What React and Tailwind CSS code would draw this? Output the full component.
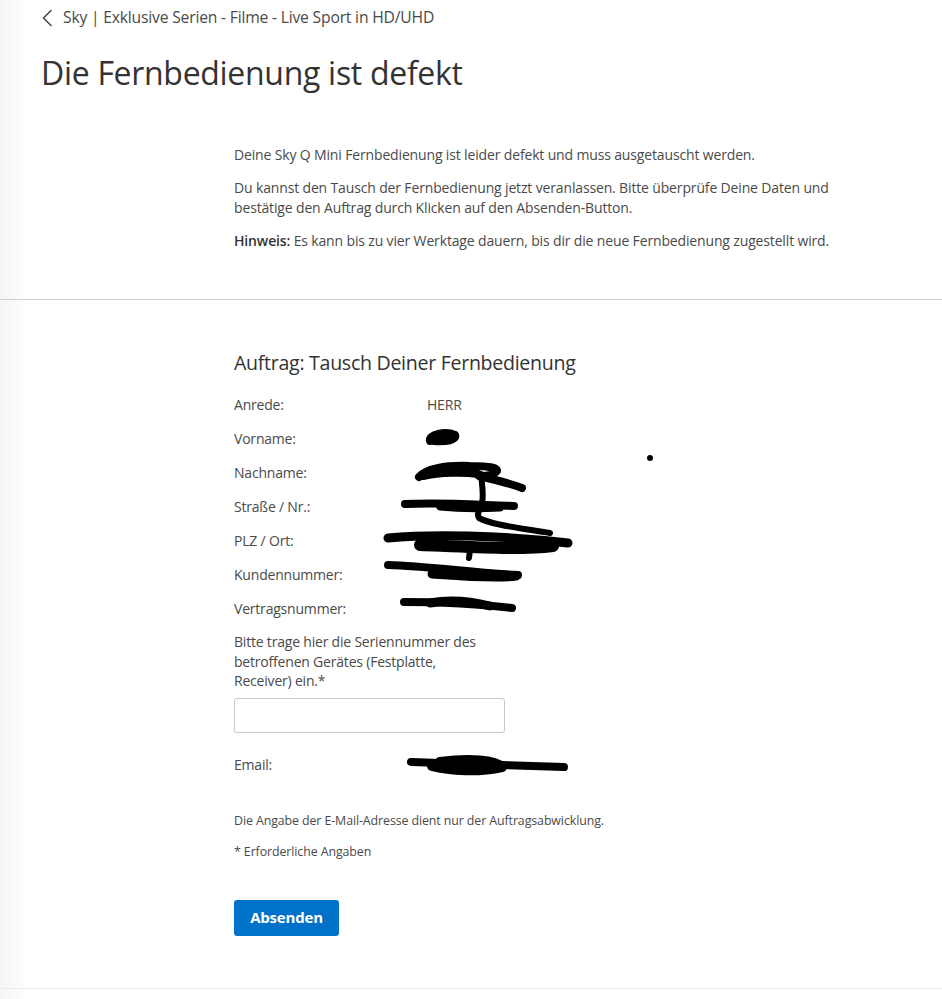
import React from "react";

function Chevron() {
  return (
    <svg width="12" height="18" viewBox="0 0 12 18" className="shrink-0">
      <path d="M10 1.5 L2.5 9 L10 16.5" fill="none" stroke="#4a4a4a" strokeWidth="1.6" strokeLinecap="round" strokeLinejoin="round" />
    </svg>
  );
}

function Row({ label, value }) {
  return (
    <div className="flex h-[34px] items-start">
      <div className="w-[193px] shrink-0">{label}</div>
      <div>{value}</div>
    </div>
  );
}

function Scribbles() {
  return (
    <svg width="942" height="999" viewBox="0 0 942 999" className="pointer-events-none absolute left-0 top-0">
      <g fill="none" stroke="#000" strokeLinecap="round" strokeLinejoin="round">
        {/* Vorname */}
        <path d="M430 441 C428 434 446 431 455 435 C457 440 446 442 434 441" strokeWidth="8" />
        {/* Nachname */}
        <path d="M419 477 C425 469 445 465 470 466 C490 466 500 468 496 472 C492 476 482 476 479 476 C495 480 510 483 522 488" strokeWidth="8" />
        <path d="M423 476 C440 472 465 472 478 474" strokeWidth="8" />
        <path d="M481 474 C482 485 484 495 482 503 C480 510 476 514 479 518 C492 525 520 528 550 533" strokeWidth="6" />
        {/* Strasse */}
        <path d="M405 504 C440 502 480 505 514 506" strokeWidth="8" />
        <path d="M440 507 C460 509 480 509 500 508" strokeWidth="7" />
        {/* PLZ */}
        <path d="M388 538 C430 534 500 535 568 543" strokeWidth="9" />
        <path d="M420 545 C470 547 520 550 553 546" strokeWidth="12" />
        <path d="M470 550 L469 558" strokeWidth="6" />
        {/* Kundennummer */}
        <path d="M388 565 C430 566 470 573 518 575" strokeWidth="8" />
        <path d="M432 574 C460 576 495 579 516 576" strokeWidth="9" />
        {/* Vertragsnummer */}
        <path d="M404 602 C440 602 480 604 512 608" strokeWidth="8" />
        <path d="M430 603 C450 599 470 601 490 606" strokeWidth="9" />
        {/* Email */}
        <path d="M411 762 C450 763 520 766 564 767" strokeWidth="8" />
        <path d="M432 766 C450 771 480 772 502 767 C495 760 470 758 440 762" strokeWidth="10" />
      </g>
      <circle cx="650" cy="458" r="3" fill="#000" />
    </svg>
  );
}

export default function App() {
  return (
    <div className="relative min-h-[999px] bg-white font-['Open_Sans',sans-serif] text-[#4a4a4a]">
      <div className="pointer-events-none absolute bottom-0 left-0 top-0 w-[24px] bg-gradient-to-r from-[#f5f5f5] to-[#fdfdfd]" />

      <div className="relative h-[300px] border-b border-[#cfcfcf]">
        <div className="flex items-center gap-[10px] pl-[41px] pt-[6px] text-[15.7px] tracking-[-0.2px]">
          <Chevron />
          <span>Sky | Exklusive Serien - Filme - Live Sport in HD/UHD</span>
        </div>
        <h1 className="mt-[22px] pl-[41px] text-[32px] font-normal leading-[42px] tracking-[-0.3px] text-[#333]">
          Die Fernbedienung ist defekt
        </h1>
        <div className="ml-[234px] mt-[51px] w-[610px] text-[14px] leading-[20px] tracking-[-0.15px]">
          <p>Deine Sky Q Mini Fernbedienung ist leider defekt und muss ausgetauscht werden.</p>
          <p className="mt-[13px]">
            Du kannst den Tausch der Fernbedienung jetzt veranlassen. Bitte überprüfe Deine Daten und bestätige den Auftrag durch Klicken auf den Absenden-Button.
          </p>
          <p className="mt-[13px]">
            <b className="font-semibold text-[#333]">Hinweis:</b> Es kann bis zu vier Werktage dauern, bis dir die neue Fernbedienung zugestellt wird.
          </p>
        </div>
      </div>

      <div className="relative h-[689px] border-b border-[#ececec]">
        <div className="ml-[234px] pt-[49px] text-[14px] tracking-[-0.2px]">
          <h2 className="text-[19.6px] font-normal leading-[28px] tracking-[-0.3px] text-[#333]">
            Auftrag: Tausch Deiner Fernbedienung
          </h2>
          <div className="mt-[18px] leading-[20px]">
            <Row label="Anrede:" value="HERR" />
            <Row label="Vorname:" value="" />
            <Row label="Nachname:" value="" />
            <Row label="Straße / Nr.:" value="" />
            <Row label="PLZ / Ort:" value="" />
            <Row label="Kundennummer:" value="" />
            <Row label="Vertragsnummer:" value="" />
          </div>
          <p className="-mt-[1px] w-[252px] leading-[19.5px]">
            Bitte trage hier die Seriennummer des betroffenen Gerätes (Festplatte, Receiver) ein.*
          </p>
          <input
            type="text"
            className="mt-[7px] block h-[35px] w-[271px] rounded-[3px] border border-[#c8c8c8] bg-white px-2 outline-none"
          />
          <div className="mt-[22px] flex leading-[20px]">
            <div className="w-[193px]">Email:</div>
            <div></div>
          </div>
          <p className="mt-[38px] text-[12.4px] leading-[16px] tracking-[-0.1px]">Die Angabe der E-Mail-Adresse dient nur der Auftragsabwicklung.</p>
          <p className="mt-[15px] text-[12.4px] leading-[16px] tracking-[-0.1px]">* Erforderliche Angaben</p>
          <button className="mt-[40px] h-[36px] w-[105px] rounded-[3px] bg-[#0072c9] text-[15px] font-bold text-white">
            Absenden
          </button>
        </div>
      </div>

      <Scribbles />
    </div>
  );
}
